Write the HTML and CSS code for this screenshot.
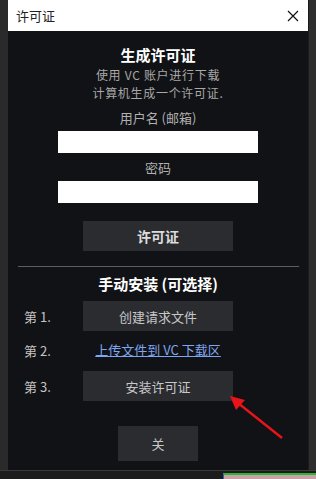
FILE: index.html
```html
<!DOCTYPE html>
<html lang="zh">
<head>
<meta charset="utf-8">
<title>许可证</title>
<link rel="stylesheet" href="styles.css">
</head>
<body>
<div class="screen">
  <div class="side side-left"></div>
  <div class="dialog">
    <div class="titlebar">
      <span class="title">许可证</span>
      <svg class="close-x" width="12" height="12" viewBox="0 0 12 12"><path d="M1 1L11 11M11 1L1 11" stroke="#111" stroke-width="1.2" fill="none"/></svg>
    </div>
    <div class="content">
      <h2 class="heading">生成许可证</h2>
      <p class="desc"><span class="desc-line">使用 VC 账户进行下载</span><span class="desc-line">计算机生成一个许可证.</span></p>
      <div class="label">用户名 (邮箱)</div>
      <div class="input"></div>
      <div class="label label-pw">密码</div>
      <div class="input"></div>
      <div class="btn btn-bold btn-gen">许可证</div>
      <div class="divider"></div>
      <h2 class="heading heading-manual">手动安装 (可选择)</h2>
      <div class="row row1">
        <span class="step">第 1.</span>
        <div class="btn">创建请求文件</div>
      </div>
      <div class="row row2">
        <span class="step">第 2.</span>
        <a class="link" href="#">上传文件到 VC 下载区</a>
      </div>
      <div class="row row3">
        <span class="step">第 3.</span>
        <div class="btn">安装许可证</div>
      </div>
      <div class="btn btn-close">关</div>
    </div>
  </div>
  <div class="side side-right"></div>
  <div class="bottom">
    <div class="bottom-left"></div>
    <div class="bottom-green"></div>
  </div>
  <svg class="arrow" width="316" height="479" viewBox="0 0 316 479">
    <line x1="282" y1="438" x2="238" y2="403" stroke="#e8141a" stroke-width="2.4"/>
    <polygon points="230,396 245,400 236,410" fill="#e8141a"/>
  </svg>
</div>
</body>
</html>
```
FILE: styles.css
```css
* { box-sizing: border-box; }
html, body { margin: 0; padding: 0; }
body {
  background: #262626;
  font-family: "Noto Sans CJK SC", "Noto Sans", sans-serif;
  font-size: 13px;
}
.screen {
  position: relative;
  width: 316px;
  height: 479px;
  display: grid;
  grid-template-columns: 8px 300px 8px;
  grid-template-rows: 470px 9px;
  overflow: hidden;
}
.side-left { background: #2a2a2b; }
.side-right { background: #2e2e2f; border-left: 1px solid #1b1b1c; }
.dialog {
  background: #111215;
  display: flex;
  flex-direction: column;
}
.titlebar {
  height: 31px;
  background: #ffffff;
  display: flex;
  align-items: center;
  justify-content: space-between;
  padding: 0 9px 0 8px;
}
.title { color: #222; font-size: 13px; line-height: 16px; }
.close-x { display: block; }
.content {
  display: flex;
  flex-direction: column;
  align-items: center;
  color: #b4b4b4;
}
.heading {
  margin: 14px 0 0;
  font-size: 15px;
  line-height: 20px;
  font-weight: bold;
  color: #ffffff;
}
.desc {
  margin: 1px 0 0;
  display: flex;
  flex-direction: column;
  align-items: center;
  font-size: 12px;
  letter-spacing: 0.7px;
  color: #a8a8a8;
}
.desc-line { display: block; line-height: 17.5px; height: 17.5px; }
.label {
  margin-top: 9px;
  line-height: 16px;
  color: #b0b0b0;
}
.label-pw { margin-top: 7px; }
.input {
  margin-top: 5px;
  width: 200px;
  height: 22px;
  background: #ffffff;
}
.btn {
  width: 150px;
  height: 30px;
  background: #2b2c30;
  color: #c8c8c8;
  display: flex;
  align-items: center;
  justify-content: center;
  font-size: 13px;
}
.btn-bold { font-weight: bold; color: #dcdcdc; font-size: 14px; }
.btn-gen { margin-top: 18px; }
.divider {
  margin: 15px 9px 0 10px;
  align-self: stretch;
  height: 1px;
  background: #5e5e60;
}
.heading-manual { margin-top: 7px; }
.row {
  align-self: stretch;
  display: grid;
  grid-template-columns: 75px 150px;
  align-items: center;
}
.row1 { margin-top: 7px; }
.row2 { margin-top: 9px; height: 20px; }
.row3 { margin-top: 11px; }
.step { padding-left: 16px; color: #c4c4c4; }
.link {
  justify-self: center;
  color: #7fa6f0;
  text-decoration: underline;
  line-height: 20px;
}
.btn-close {
  margin-top: 25px;
  width: 80px;
  height: 35px;
}
.bottom {
  grid-column: 1 / 4;
  background: #1c1c1d;
  border-top: 1px solid #3a3a3a;
  position: relative;
  display: flex;
}
.bottom-left { width: 223px; }
.bottom-green {
  flex: 1;
  border-top: 2px solid #2bb532;
  background: #c9a2a8;
  margin-top: 2px;
  border-left: 1px solid #2a5fb8;
}
.arrow { position: absolute; left: 0; top: 0; pointer-events: none; }
```
